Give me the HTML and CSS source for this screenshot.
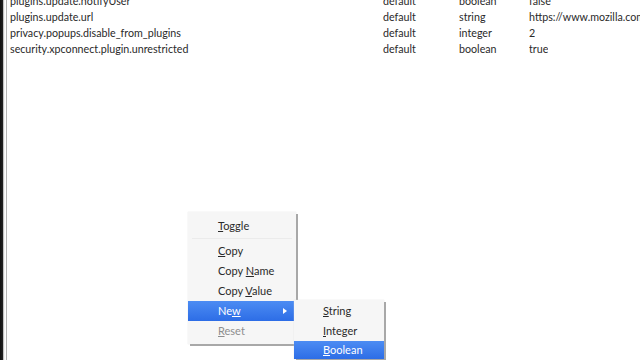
FILE: index.html
```html
<!DOCTYPE html>
<html lang="en">

<head>
    <meta charset="UTF-8">
    <title>about:config</title>
    <link rel="stylesheet" href="styles.css">
</head>

<body>
    <div class="window">
        <div class="frame"></div>
        <div class="prefs">
            <div class="row">
                <span class="name">plugins.update.notifyUser</span>
                <span class="status">default</span>
                <span class="type">boolean</span>
                <span class="value">false</span>
            </div>
            <div class="row">
                <span class="name">plugins.update.url</span>
                <span class="status">default</span>
                <span class="type">string</span>
                <span class="value">https://www.mozilla.com/%LOCALE%/plugincheck/</span>
            </div>
            <div class="row">
                <span class="name">privacy.popups.disable_from_plugins</span>
                <span class="status">default</span>
                <span class="type">integer</span>
                <span class="value">2</span>
            </div>
            <div class="row">
                <span class="name">security.xpconnect.plugin.unrestricted</span>
                <span class="status">default</span>
                <span class="type">boolean</span>
                <span class="value">true</span>
            </div>
        </div>
    </div>

    <!-- context menu -->
    <div class="menu main-menu">
        <div class="item"><u>T</u>oggle</div>
        <div class="sep"></div>
        <div class="item"><u>C</u>opy</div>
        <div class="item">Copy <u>N</u>ame</div>
        <div class="item">Copy <u>V</u>alue</div>
        <div class="item active">Ne<u>w</u><span class="arrow"></span></div>
        <div class="item disabled"><u>R</u>eset</div>
    </div>

    <div class="menu sub-menu">
        <div class="item"><u>S</u>tring</div>
        <div class="item"><u>I</u>nteger</div>
        <div class="item active"><u>B</u>oolean</div>
    </div>
</body>

</html>
```

FILE: styles.css
```css
body {
    margin: 0;
    background-color: #fff;
    font-family: 'Lato', 'Open Sans', sans-serif;
    font-size: 11px;
    color: #2a2a2a;
    width: 640px;
    height: 360px;
    overflow: hidden;
}

.window {
    display: flex;
    height: 360px;
}

.frame {
    width: 7px;
    flex-shrink: 0;
    background: linear-gradient(to right, #111 0, #222 3px, #9a9a9a 3px, #e8e8e8 4px, #fff 5px, #fff 6px, #b5b5b5 6px, #b5b5b5 7px);
}

.prefs {
    margin-top: -7px;
    padding-left: 3px;
    flex: 1;
    min-width: 0;
}

.row {
    display: flex;
    height: 16px;
    line-height: 16px;
    white-space: nowrap;
    font-size: 10.7px;
}

.name {
    width: 373px;
    flex-shrink: 0;
}

.status {
    width: 76px;
    flex-shrink: 0;
}

.type {
    width: 70px;
    flex-shrink: 0;
}

.value {
    overflow: hidden;
}

/* popup menus */
.menu {
    position: absolute;
    background-color: #f6f6f6;
    box-shadow: 2px 2px 0 #a8a8a8, 0 0 1px #ddd;
}

.main-menu {
    left: 188px;
    top: 212px;
    width: 108px;
    padding: 4px 0 3px;
}

.sub-menu {
    left: 294px;
    top: 300px;
    width: 90px;
    padding: 1px 0 0;
}

.item {
    position: relative;
    height: 20px;
    line-height: 20px;
    padding-left: 30px;
    white-space: nowrap;
}

.sub-menu .item {
    padding-left: 29px;
}

.item u {
    text-decoration: underline;
    text-underline-offset: 1px;
}

.sep {
    height: 1px;
    margin: 2px 4px 2px 4px;
    background-color: #ebebeb;
}

.item.active {
    background: linear-gradient(#4c8cf3, #2d6de6);
    color: #fff;
}

.sub-menu .item.active {
    height: 18px;
    line-height: 18px;
}

.item.disabled {
    color: #8e8e8e;
}

.arrow {
    position: absolute;
    right: 9px;
    top: 7px;
    border-left: 4px solid #fff;
    border-top: 3px solid transparent;
    border-bottom: 3px solid transparent;
}
```
